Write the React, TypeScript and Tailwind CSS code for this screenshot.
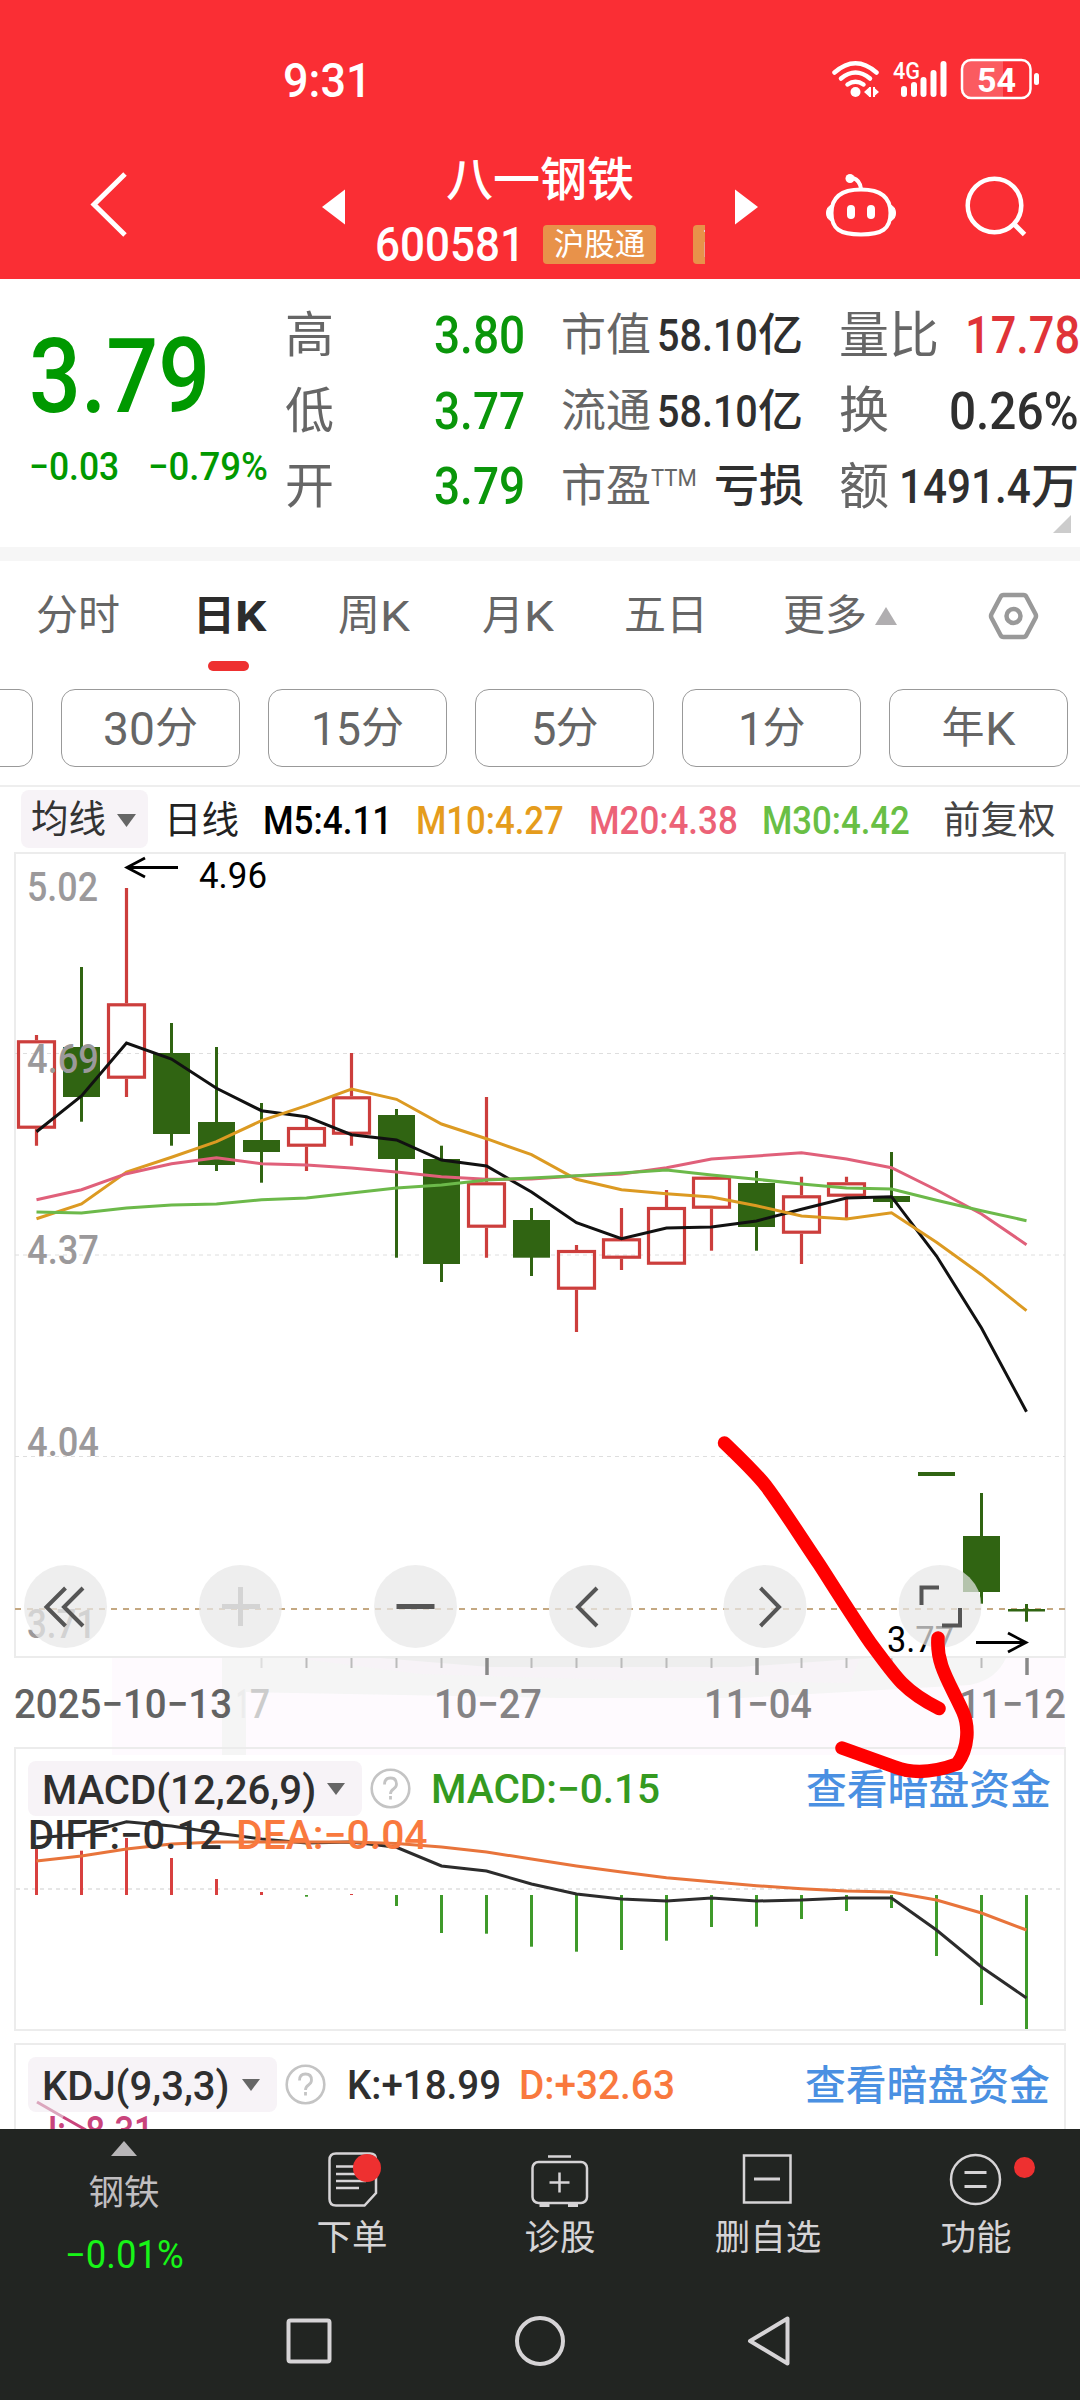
import { useLayoutEffect, useRef, useState } from "react";
import type { ReactNode } from "react";
import clsx from "clsx";

// Squeezes a line of text to the width of its box, like a condensed DIN face.
function Fit({ className, children }: { className: string; children: ReactNode }) {
  const box = useRef<HTMLSpanElement>(null);
  const line = useRef<HTMLSpanElement>(null);
  const [scale, setScale] = useState(1);

  useLayoutEffect(() => {
    if (box.current && line.current && line.current.offsetWidth) {
      setScale(box.current.offsetWidth / line.current.offsetWidth);
    }
  }, []);

  return (
    <span ref={box} className={clsx("block shrink-0 leading-none", className)}>
      <span
        ref={line}
        className="inline-block origin-left whitespace-nowrap align-top"
        style={{ transform: `scaleX(${scale})` }}
      >
        {children}
      </span>
    </span>
  );
}

const X0 = 36.5;
const STEP = 45;
const x = (i: number) => X0 + i * STEP;
const line = (ys: number[]) => ys.map((y, i) => `${x(i)},${y}`).join(" ");

// [up, high, low, top, bottom]
const candles: [boolean, number, number, number, number][] = [
  [true, 1035, 1145.7, 1040.3, 1128.7],
  [false, 967, 1121.7, 1047, 1097],
  [true, 888, 1097, 1003.3, 1078.7],
  [false, 1023, 1145.7, 1053, 1134],
  [false, 1047, 1171, 1122, 1165],
  [false, 1103, 1182.7, 1140, 1152],
  [true, 1116, 1171, 1127, 1146.7],
  [true, 1053, 1145.7, 1096.3, 1134.7],
  [false, 1109, 1257.7, 1115, 1159],
  [false, 1145.7, 1282, 1159, 1264],
  [true, 1097, 1257.7, 1182.3, 1227.7],
  [false, 1208, 1276, 1220, 1257.7],
  [true, 1245, 1332, 1250, 1289.7],
  [true, 1208, 1270, 1238.3, 1258.7],
  [true, 1190, 1264.7, 1207, 1264.7],
  [true, 1176.7, 1250.7, 1176.7, 1208.7],
  [false, 1171, 1250.7, 1183, 1227],
  [true, 1176.7, 1264, 1195.3, 1233.7],
  [true, 1176.7, 1219, 1182.3, 1196.7],
  [false, 1152, 1208, 1196, 1202],
  [false, 1472, 1476, 1472, 1476],
  [false, 1493, 1603.7, 1536, 1592],
  [false, 1604, 1621.7, 1609, 1611.5],
];

const m5 = [1131.7, 1096, 1043, 1059, 1088.3, 1110.7, 1116.7, 1134.7, 1140, 1160, 1166, 1192, 1222.7, 1238.7, 1228, 1227, 1221, 1209.3, 1198, 1196.7, 1256, 1328, 1411.7];
const m10 = [1218.7, 1204, 1172, 1157.3, 1141.7, 1120.7, 1105.7, 1089, 1099.3, 1124, 1138.7, 1154.7, 1179.3, 1189.7, 1193.7, 1197, 1205.7, 1216, 1219, 1212.7, 1242.3, 1274.7, 1310.7];
const m20 = [1199.7, 1189.7, 1173.7, 1163.7, 1157.7, 1163.7, 1165, 1168, 1172, 1176.7, 1179.3, 1179, 1176, 1174, 1167.7, 1159, 1156, 1152.7, 1159, 1167.7, 1190, 1214, 1244.7];
const m30 = [1212, 1213, 1208, 1205, 1204, 1199.7, 1198, 1193, 1188, 1185, 1180, 1178, 1175.7, 1173, 1170, 1175, 1179.3, 1184, 1188, 1189, 1200.3, 1210.7, 1220.7];

const diff = [1838, 1834, 1821.7, 1826, 1833, 1839, 1843, 1842, 1847.3, 1866, 1871, 1884, 1894, 1899, 1901, 1898, 1901, 1900, 1898, 1898, 1930, 1967, 1998];
const dea = [1861, 1856, 1849, 1844, 1842, 1842, 1842, 1842, 1843.5, 1847, 1852, 1859, 1866, 1872, 1877.7, 1881.7, 1885.7, 1888.7, 1891, 1892, 1900, 1913, 1930];
const bars = [1847.3, 1850.7, 1838, 1858, 1879, 1892, 1896.7, 1894, 1906, 1933, 1933.7, 1946.7, 1951.7, 1950, 1940.7, 1927, 1926.7, 1919, 1911, 1908, 1956, 2005, 2029];

const periods = ["30", "15", "5", "1"];
const periodWidths = ["w-[52px]", "w-[50px]", "w-[25px]", "w-[25px]"];

function Header() {
  return (
    <header className="h-[279px] bg-[#fa2e34] text-white">
      <div className="flex h-[155px] items-center pt-[7px]">
        <Fit className="ml-[283px] w-[89px] text-[48px] font-medium">9:31</Fit>
        <svg className="ml-[457px]" width="220" height="50" viewBox="829 56 220 50" fill="none" stroke="#fff" strokeLinecap="round">
          <g strokeWidth="4.5">
            <path d="M834.5 72.500Q855.500 54 876.500 72.500" />
            <path d="M841 78.500Q855.500 66.500 870 78.500" />
            <path d="M847.500 84.500Q855.500 79 863.500 84.500" />
          </g>
          <g fill="#fff" stroke="none">
            <circle cx="855.5" cy="92" r="5" />
            <path d="M864 92l5-4.500v9zM879 92l-5-4.500v9z" />
            <rect x="869" y="87" width="2" height="10" />
            <rect x="873" y="87" width="2" height="10" />
            <rect x="901" y="86" width="6" height="11" rx="3" />
            <rect x="911" y="82" width="6" height="15" rx="3" />
            <rect x="920.500" y="77" width="6" height="20" rx="3" />
            <rect x="930.500" y="70" width="6" height="27" rx="3" />
            <rect x="940.500" y="61" width="6" height="36" rx="3" />
            <path d="M969 61h34v36h-34q-7 0-7-7v-22q0-7 7-7z" fillOpacity=".22" />
            <rect x="1034" y="73" width="5" height="12" rx="2.500" />
            <text x="893" y="79" fontSize="24" fontWeight="500" textLength="27" lengthAdjust="spacingAndGlyphs">4G</text>
            <text x="977" y="91.500" fontSize="34" fontWeight="700" textLength="39" lengthAdjust="spacingAndGlyphs">54</text>
          </g>
          <rect x="962" y="60" width="68.500" height="38" rx="9" strokeWidth="2.500" />
        </svg>
      </div>
      <div className="flex h-[124px]">
        <svg className="ml-[88px] mt-[15px]" width="44" height="70" viewBox="88 170 44 70" fill="none" stroke="#fff" strokeWidth="5">
          <path d="M125 174L94 204.500 125 235" />
        </svg>
        <svg className="ml-[190px] mt-[34px]" width="24" height="36" viewBox="0 0 24 36" fill="#fff">
          <path d="M0 18L23 .5V35.500z" />
        </svg>
        <div className="ml-[29px] w-[330px]">
          <div className="ml-[71px] text-[47px] leading-[50px] font-medium">八一钢铁</div>
          <div className="mt-[14px] flex h-[50px] items-center overflow-hidden">
            <Fit className="w-[150px] text-[49px] font-medium">600581</Fit>
            <div className="ml-[18px] h-[39px] w-[113px] shrink-0 rounded bg-[#e8924a] text-center text-[30.5px] leading-[40px]">沪股通</div>
            <div className="ml-[37px] h-[39px] w-[13px] shrink-0 overflow-hidden rounded-l bg-[#e8924a] pl-[10px] text-[30px] leading-[38px]">融</div>
          </div>
        </div>
        <svg className="ml-[29px] mt-[34px]" width="24" height="36" viewBox="0 0 24 36" fill="#fff">
          <path d="M24 18L1 .5V35.500z" />
        </svg>
        <svg className="ml-[66px] mt-[15px]" width="210" height="70" viewBox="824 170 210 70" fill="none" stroke="#fff" strokeWidth="4">
          <path d="M861 189.500C880 189.500 890.500 197 890.500 213S882 234.500 861 234.500 831.500 229 831.500 213 842 189.500 861 189.500z" />
          <path d="M861 189q-1-9-8-11" />
          <circle cx="850" cy="178.500" r="4.500" fill="#fff" stroke="none" />
          <path d="M831.500 205q-5 2-5 8t5 8M890.500 205q5 2 5 8t-5 8" fill="#fff" strokeWidth="1" />
          <path d="M851 209v6M871 209v6" strokeWidth="8" strokeLinecap="round" />
          <circle cx="994.500" cy="205.500" r="26.800" strokeWidth="4.500" />
          <path d="M1013.500 223.500l11 11" strokeWidth="5" />
        </svg>
      </div>
    </header>
  );
}

function Quote() {
  return (
    <section className="flex h-[268px] overflow-hidden">
      <div className="w-[285px] shrink-0 pt-[46px] text-[#009900]">
        <Fit className="ml-[29px] w-[181px] text-[104px] font-medium">3.79</Fit>
        <div className="mt-[19px] flex">
          <Fit className="ml-[29px] w-[90px] text-[39px] font-medium">−0.03</Fit>
          <Fit className="ml-[29px] w-[120px] text-[39px] font-medium">−0.79%</Fit>
        </div>
      </div>
      <div className="w-[276px] shrink-0 pt-[19px]">
        {[["高", "3.80"], ["低", "3.77"], ["开", "3.79"]].map(([label, value]) => (
          <div key={label} className="flex h-[75.5px] items-center">
            <span className="w-[149px] text-[49px] leading-none text-[#666]">{label}</span>
            <Fit className="w-[91px] text-[51px] font-medium text-[#0a960a]">{value}</Fit>
          </div>
        ))}
      </div>
      <div className="w-[278px] shrink-0 pt-[19px] text-[45px] leading-none whitespace-nowrap text-[#666]">
        {["市值", "流通"].map((label) => (
          <div key={label} className="flex h-[75.5px] items-center">
            <span className="w-[96px]">{label}</span>
            <Fit className="w-[101px] text-[45px] font-medium text-[#2f2f2f]">58.10</Fit>
            <span className="font-medium text-[#2f2f2f]">亿</span>
          </div>
        ))}
        <div className="flex h-[75.5px] items-center">
          <span className="w-[90px]">市盈</span>
          <Fit className="mb-[18px] w-[46px] text-[24px]">TTM</Fit>
          <span className="ml-[17px] font-medium text-[#2f2f2f]">亏损</span>
        </div>
      </div>
      <div className="w-[241px] shrink-0 pt-[19px] text-[50px] leading-none whitespace-nowrap text-[#666]">
        <div className="flex h-[75.5px] items-center">
          <span>量比</span>
          <Fit className="ml-[26px] w-[115px] text-[51px] font-medium text-[#e03338]">17.78</Fit>
        </div>
        <div className="flex h-[75.5px] items-center">
          <span>换</span>
          <Fit className="ml-[60px] w-[130px] text-[51px] font-medium text-[#2f2f2f]">0.26%</Fit>
        </div>
        <div className="flex h-[75.5px] items-center">
          <span>额</span>
          <Fit className="ml-[10px] w-[132px] text-[49px] font-medium text-[#2f2f2f]">1491.4</Fit>
          <span className="text-[48px] font-medium text-[#2f2f2f]">万</span>
        </div>
        <svg className="ml-[214px] mt-[-10px]" width="18" height="18" viewBox="0 0 18 18">
          <path d="M18 0v18H0z" fill="#ccc" />
        </svg>
      </div>
    </section>
  );
}

function Tabs() {
  return (
    <nav className="h-[128px] text-[42px] leading-none text-[#666]">
      <div className="flex h-[100px] items-end pb-[22px]">
        <div className="flex h-[46px] items-center whitespace-nowrap">
          <span className="ml-[36px] w-[157px]">分时</span>
          <div className="flex w-[145px] items-center font-bold text-[#2c2c2c]">
            <span>日</span>
            <Fit className="w-[31px] text-[43px]">K</Fit>
          </div>
          <div className="flex w-[144px] items-center">
            <span>周</span>
            <Fit className="w-[30px] text-[43px]">K</Fit>
          </div>
          <div className="flex w-[142px] items-center">
            <span>月</span>
            <Fit className="w-[30px] text-[43px]">K</Fit>
          </div>
          <span className="w-[159px]">五日</span>
          <span className="w-[92px]">更多</span>
          <svg width="22" height="18" viewBox="0 0 22 18">
            <path d="M11 0l11 18H0z" fill="#b0aeb0" />
          </svg>
          <svg className="ml-[91px]" width="52" height="50" viewBox="0 0 52 50" fill="none" stroke="#999" strokeWidth="4.500" strokeLinejoin="round">
            <path d="M15.500 4h20q2 0 3 2l9 17q1 2 0 4l-9 17q-1 2-3 2h-20q-2 0-3-2l-9-17q-1-2 0-4l9-17q1-2 3-2z" />
            <circle cx="25.500" cy="25" r="7" />
          </svg>
        </div>
      </div>
      <div className="ml-[208px] h-[10px] w-[41px] rounded-full bg-[#ee3030]" />
    </nav>
  );
}

function Periods() {
  return (
    <div className="flex h-[78px] gap-[28px] overflow-hidden pr-[12px] text-[43px] leading-none text-[#666]">
      <div className="ml-[-146px] w-[179px] shrink-0 rounded-[14px] border border-[#999]" />
      {periods.map((p, i) => (
        <div key={p} className="flex w-[179px] shrink-0 items-center justify-center rounded-[14px] border border-[#999]">
          <Fit className={clsx("text-[47px]", periodWidths[i])}>{p}</Fit>
          <span>分</span>
        </div>
      ))}
      <div className="flex w-[179px] shrink-0 items-center justify-center rounded-[14px] border border-[#999]">
        <span>年</span>
        <Fit className="w-[31px] text-[47px]">K</Fit>
      </div>
    </div>
  );
}

function Legend() {
  return (
    <div className="mt-[18px] flex h-[67px] items-start border-t-2 border-[#eee] pt-[3px] text-[37.5px] leading-none whitespace-nowrap">
      <div className="ml-[21px] flex h-[58px] w-[127px] items-center rounded-lg bg-[#f7f3f7] pt-[2px] pl-[10px] text-[#333]">
        <span>均线</span>
        <svg className="ml-[11px]" width="19" height="13" viewBox="0 0 19 13">
          <path d="M0 0h19L9.500 13z" fill="#666" />
        </svg>
      </div>
      <div className="flex h-[60px] items-center pt-[2px]">
        <span className="ml-[16px] w-[99px] text-[#222]">日线</span>
        <Fit className="w-[129px] text-[38px] font-medium text-black">M5:4.11</Fit>
        <Fit className="ml-[24px] w-[148px] text-[38px] font-medium text-[#e59c1c]">M10:4.27</Fit>
        <Fit className="ml-[25px] w-[149px] text-[38px] font-medium text-[#ec6277]">M20:4.38</Fit>
        <Fit className="ml-[24px] w-[148px] text-[38px] font-medium text-[#69bf45]">M30:4.42</Fit>
        <span className="ml-[33px] text-[#444]">前复权</span>
      </div>
    </div>
  );
}

function KLine() {
  return (
    <svg className="block" width="1080" height="896" viewBox="0 852 1080 896" fill="none">
      <rect x="112" y="1658" width="953" height="90" fill="#fefafe" />
      <path d="M222 1658H1006Q996 1680 970 1685L740 1698H560L246 1692V1748H222z" fill="#f5f5f5" />
      <path d="M295 1658H860L850 1683 620 1680 420 1674z" fill="#f7f3f7" />
      <path d="M380 1658H870L740 1667H490z" fill="#eee" />
      <rect x="15" y="853" width="1050" height="804" stroke="#ececec" strokeWidth="2" />
      <path d="M15 1053.500H1065M15 1255H1065M15 1456.500H1065" stroke="#dedede" strokeDasharray="4 4" />
      <path d="M15 1609H1065" stroke="#c4a882" strokeWidth="2" strokeDasharray="6 6" />

      {candles.map(([up, high, low, top, bottom], i) =>
        up ? (
          <g key={i} stroke="#cc3e3c" strokeWidth="3.200">
            <path d={`M${x(i)} ${high}V${top}M${x(i)} ${bottom}V${low}`} />
            <rect x={x(i) - 18} y={top + 1.5} width="36" height={bottom - top - 3} />
          </g>
        ) : (
          <g key={i} fill="#306412">
            <rect x={x(i) - 1.5} y={high} width={i === 20 ? 0 : 3} height={low - high} />
            <rect x={x(i) - 18.5} y={top} width="37" height={bottom - top} />
          </g>
        ),
      )}

      <g fill="#9b999b" fontSize="40" fontWeight="500">
        <text x="27" y="901" textLength="71" lengthAdjust="spacingAndGlyphs">5.02</text>
        <text x="27" y="1073" textLength="72" lengthAdjust="spacingAndGlyphs">4.69</text>
        <text x="27" y="1264" textLength="72" lengthAdjust="spacingAndGlyphs">4.37</text>
        <text x="27" y="1456" textLength="72" lengthAdjust="spacingAndGlyphs">4.04</text>
        <text x="27" y="1638" textLength="69" lengthAdjust="spacingAndGlyphs">3.71</text>
      </g>

      <g strokeWidth="3">
        <polyline points={line(m5)} stroke="#111" />
        <polyline points={line(m10)} stroke="#dc9a22" />
        <polyline points={line(m20)} stroke="#e0607a" />
        <polyline points={line(m30)} stroke="#6cb94a" />
      </g>

      <g fill="#000" fontSize="36">
        <text x="199" y="888" textLength="68" lengthAdjust="spacingAndGlyphs">4.96</text>
        <text x="887" y="1652" textLength="67" lengthAdjust="spacingAndGlyphs">3.77</text>
      </g>
      <path d="M178 867.500H127M145 858L127 867.500 145 877M976 1642.500H1026M1008 1633L1026 1642.500 1008 1652" stroke="#000" strokeWidth="2.800" />

      {[65.5, 240.4, 415.5, 590.3, 765, 940].map((cx) => (
        <circle key={cx} cx={cx} cy="1606.500" r="41.500" fill="#e7e7e7" fillOpacity=".72" />
      ))}
      <g stroke="#555" strokeWidth="4">
        <path d="M65.500 1588L46.500 1607 65.500 1626M83 1588L64 1607 83 1626" />
        <path d="M222 1606.500h38M240.500 1587v39" stroke="#d4d4d4" strokeWidth="5" />
        <path d="M396.500 1606.500h38" strokeWidth="5" />
        <path d="M597 1588L578 1607 597 1626M760.500 1588L779 1607 760.500 1626" />
        <path d="M939 1587.500H921.500V1605M960 1608V1625.500H942" />
      </g>

      {Array.from({ length: 17 }, (_, k) => k + 5).map((i) => (
        <path
          key={i}
          d={i === 10 || i === 16 ? `M${x(i) + 0.5} 1658v17` : `M${x(i)} 1658v10`}
          stroke={i === 10 || i === 16 ? "#888" : i === 5 ? "#ddd" : "#bbb"}
          strokeWidth={i === 10 || i === 16 ? 3.5 : 2}
        />
      ))}
      <path d="M1027 1658v17" stroke="#888" strokeWidth="3.500" />

      <g fill="#858385" fontSize="40" fontWeight="500">
        <text x="14" y="1718" fill="#636363" textLength="218" lengthAdjust="spacingAndGlyphs">2025−10−13</text>
        <text x="236" y="1718" fill="#ececec" textLength="13" lengthAdjust="spacingAndGlyphs">1</text>
        <text x="250" y="1718" fill="#ccc" textLength="20" lengthAdjust="spacingAndGlyphs">7</text>
        <text x="434" y="1718" textLength="108" lengthAdjust="spacingAndGlyphs">10−27</text>
        <text x="704" y="1718" textLength="108" lengthAdjust="spacingAndGlyphs">11−04</text>
        <text x="959" y="1718" textLength="107" lengthAdjust="spacingAndGlyphs">11−12</text>
      </g>
    </svg>
  );
}

function Help() {
  return (
    <svg className="ml-[8px]" width="41" height="43" viewBox="0 0 41 43" fill="none" stroke="#c4c4c4" strokeWidth="2.600">
      <circle cx="20.500" cy="21.500" r="18.800" />
      <path d="M14.500 17.500q0-6.500 6-6.500t6 6q0 3-3 5t-3 5M20.500 29v3.500" strokeWidth="2.800" />
    </svg>
  );
}

function Caret() {
  return (
    <svg width="18" height="12" viewBox="0 0 18 12">
      <path d="M0 0h18L9 12z" fill="#666" />
    </svg>
  );
}

function Macd() {
  return (
    <section className="relative ml-[14px] h-[284px] w-[1052px] border-2 border-[#ececec] text-[40px]">
      <svg className="absolute left-[-2px] top-[-2px]" width="1052" height="284" viewBox="14 1747 1052 284" fill="none">
        <rect x="112" y="1749" width="952" height="6" fill="#fefafe" />
        <rect x="222" y="1749" width="24" height="6" fill="#f5f5f5" />
        <path d="M16 1889H1064" stroke="#e6e6e6" strokeWidth="2" strokeDasharray="4 4" />
        {bars.map((y, i) => (
          <path key={i} d={`M${x(i)} 1895V${y}`} stroke={i < 6 || i === 7 ? "#d8403f" : "#3f9a2a"} strokeWidth="3" />
        ))}
        <polyline points={line(diff)} stroke="#2c2c2c" strokeWidth="3" />
        <polyline points={line(dea)} stroke="#e8743b" strokeWidth="3" />
      </svg>
      <div className="relative mt-[12px] flex h-[55px] items-center">
        <div className="ml-[12px] flex h-[55px] w-[334px] items-center rounded-lg bg-[#f7f3f7] text-[#2f2f2f]">
          <Fit className="ml-[14px] mr-[11px] mt-[4px] w-[274px] font-medium">MACD(12,26,9)</Fit>
          <Caret />
        </div>
        <Help />
        <Fit className="ml-[20px] mt-[3px] w-[229px] font-medium text-[#349a20]">MACD:−0.15</Fit>
        <span className="ml-[146px] mt-[4px] text-[40.800px] leading-none font-medium text-[#4a90e2]">查看暗盘资金</span>
      </div>
      <div className="relative flex">
        <Fit className="ml-[12px] w-[194px] font-medium text-[#2f2f2f]">DIFF:−0.12</Fit>
        <Fit className="ml-[14px] w-[192px] font-medium text-[#f9793e]">DEA:−0.04</Fit>
      </div>
    </section>
  );
}

function Kdj() {
  return (
    <section className="relative ml-[14px] mt-[12px] h-[86px] w-[1052px] overflow-hidden border-2 border-b-0 border-[#ececec] text-[40px]">
      <div className="mt-[12px] flex h-[55px] items-center">
        <div className="ml-[12px] flex h-[55px] w-[249px] items-center rounded-lg bg-[#f7f3f7] text-[#2f2f2f]">
          <Fit className="ml-[14px] mr-[12px] mt-[4px] w-[188px] font-medium">KDJ(9,3,3)</Fit>
          <Caret />
        </div>
        <Help />
        <Fit className="ml-[21px] mt-[3px] w-[154px] font-medium text-[#2f2f2f]">K:+18.99</Fit>
        <Fit className="ml-[18px] mt-[3px] w-[156px] font-medium text-[#f9793e]">D:+32.63</Fit>
        <span className="ml-[130px] mt-[4px] text-[40.800px] leading-none font-medium text-[#4a90e2]">查看暗盘资金</span>
      </div>
      <Fit className="ml-[22px] w-[116px] font-medium text-[#c9447c]">J:−8.31</Fit>
      <svg className="absolute left-[-2px] top-[-2px]" width="200" height="86" viewBox="14 2043 200 86">
        <path d="M37 2102L63 2117" stroke="#dba6bd" strokeWidth="3" />
        <path d="M63 2117L86 2130" stroke="#c9447c" strokeWidth="3" />
      </svg>
    </section>
  );
}

function BottomBar() {
  return (
    <footer className="h-[271px] bg-[#222522] text-[35.500px] leading-none text-[#d6d4d6]">
      <div className="flex h-[166px]">
        <div className="flex w-[248px] flex-col items-center text-[#c0bec0]">
          <svg className="mt-[12px]" width="26" height="15" viewBox="0 0 26 15">
            <path d="M13 0l13 15H0z" fill="#b8b6b8" />
          </svg>
          <span className="mt-[20px]">钢铁</span>
          <Fit className="mt-[24px] w-[119px] text-[38px] text-[#17f517]">−0.01%</Fit>
        </div>
        <div className="flex w-[208px] flex-col items-center">
          <svg className="mt-[19px]" width="60" height="64" viewBox="322 2148 60 64" fill="none" stroke="#d6d4d6" strokeWidth="2.500">
            <path d="M336 2153.500h34q6 0 6 6V2193L364.500 2205.500H336q-6.500 0-6.500-6.500v-39q0-6.500 6.500-6.500z" />
            <path d="M336 2166.500h22M336 2174h24M336 2181h30M336 2188h23" />
            <circle cx="367" cy="2168" r="14" fill="#ee3030" stroke="none" />
          </svg>
          <span className="mt-[9px]">下单</span>
        </div>
        <div className="flex w-[208px] flex-col items-center">
          <svg className="mt-[19px]" width="62" height="64" viewBox="529 2148 62 64" fill="none" stroke="#d6d4d6" strokeWidth="2.500">
            <rect x="532.500" y="2162" width="54.500" height="41" rx="6" />
            <path d="M548 2156.500h23M549.500 2182.500h20M559.500 2172.500v20" />
            <path d="M539.500 2205h10M568 2205h10" strokeWidth="4" />
          </svg>
          <span className="mt-[9px]">诊股</span>
        </div>
        <div className="flex w-[208px] flex-col items-center">
          <svg className="mt-[19px]" width="60" height="64" viewBox="738 2148 60 64" fill="none" stroke="#d6d4d6" strokeWidth="2.500">
            <rect x="744" y="2155.500" width="46.500" height="47" />
            <path d="M754 2179h26" strokeWidth="3" />
          </svg>
          <span className="mt-[9px]">删自选</span>
        </div>
        <div className="flex w-[208px] flex-col items-center">
          <svg className="mt-[19px]" width="124" height="64" viewBox="914 2148 124 64" fill="none" stroke="#d6d4d6" strokeWidth="2.500">
            <circle cx="975.500" cy="2179.500" r="24.500" />
            <path d="M964.500 2172.500h22M964.500 2186.500h22" strokeWidth="3" />
            <circle cx="1024.500" cy="2167.500" r="10.500" fill="#ee3030" stroke="none" />
          </svg>
          <span className="mt-[9px]">功能</span>
        </div>
      </div>
      <svg className="ml-[270px] mt-[15px]" width="540" height="62" viewBox="270 2310 540 62" fill="none" stroke="#d6d4d6" strokeWidth="4" strokeLinejoin="round">
        <rect x="288.500" y="2320.500" width="41" height="41" rx="2" />
        <circle cx="540" cy="2341" r="23" />
        <path d="M750 2341L787.500 2318.500V2363.500z" />
      </svg>
    </footer>
  );
}

export default function App() {
  return (
    <div className="relative h-[2400px] w-[1080px] overflow-hidden bg-white font-[Roboto,'Noto_Sans_CJK_SC',sans-serif]">
      <Header />
      <Quote />
      <div className="h-[14px] bg-[#f6f6f6]" />
      <Tabs />
      <Periods />
      <Legend />
      <div className="-mb-px">
        <KLine />
      </div>
      <Macd />
      <Kdj />
      <BottomBar />
      {/* hand-drawn marker arrow */}
      <svg
        className="absolute left-[700px] top-[1420px]"
        width="300"
        height="370"
        viewBox="700 1420 300 370"
        fill="none"
        stroke="#f00"
        strokeWidth="13.500"
        strokeLinecap="round"
        strokeLinejoin="round"
      >
        <path d="M724.500 1443C740 1458 754 1471 766 1486C782 1507 798 1533 819 1564C832 1584 850 1613 870.500 1643C884 1661 893 1674 902 1683C913 1694 926 1702 939 1708.500" />
        <path d="M938 1638C936 1665 950 1683 963 1712C969 1726 969 1748 957 1764C935 1772 913 1774 895 1767L842 1748" />
      </svg>
    </div>
  );
}
